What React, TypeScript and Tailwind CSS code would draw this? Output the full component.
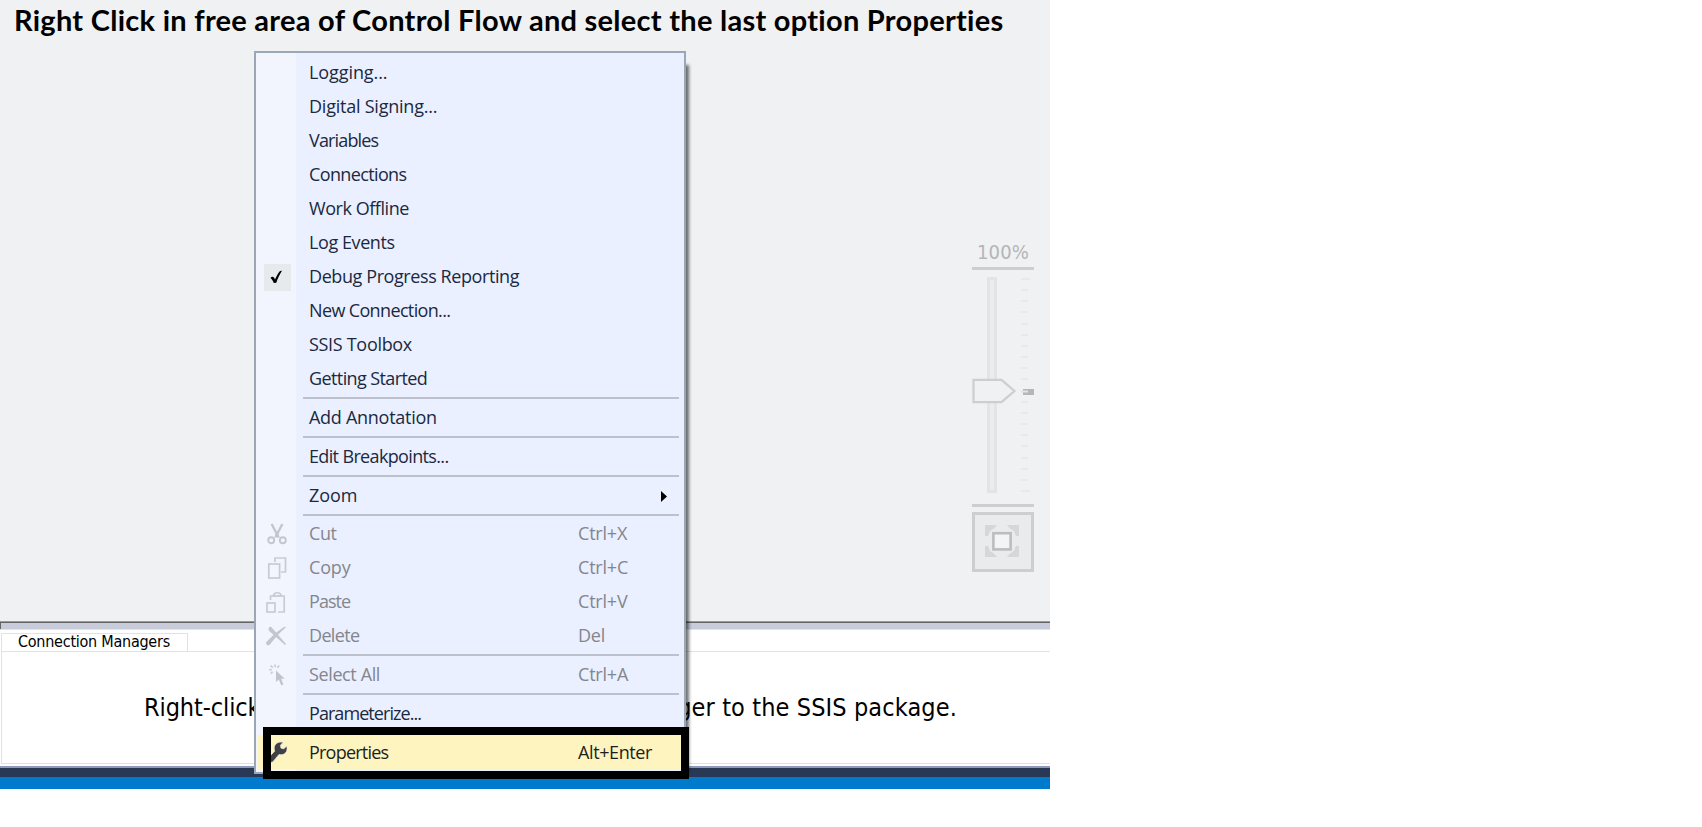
import type { ReactNode } from "react";

const menuFont = "font-['Open_Sans','Noto_Sans',sans-serif]";
const tahoma = "font-['DejaVu_Sans_Condensed','DejaVu_Sans',sans-serif]";

type Item = {
  label: string;
  keys?: string;
  icon?: ReactNode;
  disabled?: boolean;
  active?: boolean;
  arrow?: boolean;
  tracking: string;
};

function CheckIcon() {
  return (
    <span className="flex h-[27px] w-[27px] items-center justify-center bg-[#e6eaed] pr-0.5">
      <svg width="13" height="14" viewBox="0 0 13 14">
        <path d="M0.5 8 C1.5 6.5 3 6.5 4 7.5 L5 9.5 C6.5 6 8.5 2.5 10 1 L12 0.7 C9.5 4.5 7.5 9 6.3 12.7 L3.8 13 C3 11 2 9 0.5 8 Z" fill="#000" />
      </svg>
    </span>
  );
}

function CutIcon() {
  return (
    <svg width="20" height="22" viewBox="0 0 20 22" fill="none" stroke="#c3c6cf">
      <path d="M4.6 1 L11.7 14.5 M15.4 1 L8.3 14.5" strokeWidth="2.4" />
      <circle cx="4.2" cy="17.3" r="3" strokeWidth="1.9" />
      <circle cx="15.8" cy="17.3" r="3" strokeWidth="1.9" />
      <circle cx="10" cy="12" r="2" fill="#c3c6cf" stroke="none" />
    </svg>
  );
}

function CopyIcon() {
  return (
    <svg width="20" height="22" viewBox="0 0 20 22" fill="none" stroke="#c8cbd4" strokeWidth="1.7">
      <path d="M8 5 V1 H18.5 V15 H14" />
      <rect x="1.8" y="7" width="10.8" height="14" />
    </svg>
  );
}

function PasteIcon() {
  return (
    <svg className="mr-0.5" width="20" height="22" viewBox="0 0 20 22" fill="none" stroke="#c8cbd4" strokeWidth="1.7">
      <path d="M4.5 9 V5 H18.2 V21 H12" />
      <path d="M6.5 5 H16 M7.5 5.5 C7.5 0.5 15.3 0.5 15.3 5.5" />
      <rect x="1" y="12" width="8" height="9" />
    </svg>
  );
}

function DeleteIcon() {
  return (
    <svg className="mr-0.5" width="20" height="20" viewBox="0 0 20 20" fill="#c3c6cf">
      <path d="M2.5 3 C2.5 1 4.5 0.2 5.5 1.3 L20 18 L19 19 L3 4.8 Z" />
      <path d="M0 16.5 C5 11 12 4.5 19 0.5 L19.8 1.4 C14 6 9 12 4 18.5 C3 20 -0.5 19 0 16.5 Z" />
    </svg>
  );
}

function SelectIcon() {
  return (
    <svg width="16" height="22" viewBox="0 0 16 22">
      <path d="M7 6.5 V18 L9.8 15.6 L12.2 21.3 L14.4 20.4 L12 14.8 H15.7 Z" fill="#c0c3cd" />
      <path d="M6 0.5 V3.2 M1.8 1.6 L3.6 3.8 M10.2 1.6 L8.4 3.8 M0.2 5.8 H2.8 M1.8 9.6 L3.6 7.8" stroke="#c8cbd4" strokeWidth="1.6" />
    </svg>
  );
}

function WrenchIcon() {
  return (
    <svg width="20" height="22" viewBox="0 0 20 22">
      <path
        d="M1.5 20.5 C0.2 19.2 0.2 17 1.3 15.8 L6.7 10.2 C4.6 4.4 9 0 15.2 1.3 L12.4 4.3 L13 7.2 L15.8 7.8 L18.7 5 C20.4 11.2 16 14.8 11 13.4 L5.6 20 C4.3 21.4 2.7 21.7 1.5 20.5 Z"
        fill="#3f3f44"
        stroke="#efeee6"
        strokeWidth="0.7"
      />
    </svg>
  );
}

const groups: Item[][] = [
  [
    { label: "Logging...", tracking: "tracking-[-0.08px]" },
    { label: "Digital Signing...", tracking: "tracking-[-0.23px]" },
    { label: "Variables", tracking: "tracking-[-0.85px]" },
    { label: "Connections", tracking: "tracking-[-0.63px]" },
    { label: "Work Offline", tracking: "tracking-[-0.45px]" },
    { label: "Log Events", tracking: "tracking-[-0.42px]" },
    { label: "Debug Progress Reporting", icon: <CheckIcon />, tracking: "tracking-[-0.41px]" },
    { label: "New Connection...", tracking: "tracking-[-0.64px]" },
    { label: "SSIS Toolbox", tracking: "tracking-[-0.31px]" },
    { label: "Getting Started", tracking: "tracking-[-0.6px]" },
  ],
  [{ label: "Add Annotation", tracking: "tracking-[-0.28px]" }],
  [{ label: "Edit Breakpoints...", tracking: "tracking-[-0.65px]" }],
  [{ label: "Zoom", arrow: true, tracking: "tracking-[-0.1px]" }],
  [
    { label: "Cut", keys: "Ctrl+X", icon: <CutIcon />, disabled: true, tracking: "tracking-[-0.4px]" },
    { label: "Copy", keys: "Ctrl+C", icon: <CopyIcon />, disabled: true, tracking: "tracking-[-0.15px]" },
    { label: "Paste", keys: "Ctrl+V", icon: <PasteIcon />, disabled: true, tracking: "tracking-[-0.95px]" },
    { label: "Delete", keys: "Del", icon: <DeleteIcon />, disabled: true, tracking: "tracking-[-0.65px]" },
  ],
  [{ label: "Select All", keys: "Ctrl+A", icon: <SelectIcon />, disabled: true, tracking: "tracking-[-0.38px]" }],
  [{ label: "Parameterize...", tracking: "tracking-[-0.94px]" }],
  [{ label: "Properties", keys: "Alt+Enter", icon: <WrenchIcon />, active: true, tracking: "tracking-[-0.78px]" }],
];

function MenuRow({ item }: { item: Item }) {
  const tone = item.disabled ? "text-[#84868c]" : item.active ? "text-[#1e1e1e]" : "text-[#1b293e]";
  const lift = item.active ? "" : "pb-0.5";
  return (
    <div className={`flex h-[34px] items-center ${tone} ${item.active ? "ml-0.5 bg-[#fdf4bf]" : ""}`}>
      <div className={`flex shrink-0 items-center justify-center ${item.active ? "w-10" : "w-[42px]"}`}>{item.icon}</div>
      <span className={`ml-[11px] w-[269px] shrink-0 whitespace-nowrap ${lift} ${item.tracking}`}>{item.label}</span>
      {item.keys && (
        <span className={`whitespace-nowrap ${item.active ? "tracking-[-0.4px]" : "tracking-[-0.2px]"} ${lift}`}>{item.keys}</span>
      )}
      {item.arrow && (
        <svg className="ml-[83px]" width="6" height="11" viewBox="0 0 6 11">
          <path d="M0 0 L6 5.5 L0 11 Z" fill="#000" />
        </svg>
      )}
    </div>
  );
}

function ContextMenu() {
  return (
    <div
      className={`absolute left-[254px] top-[51px] h-[723px] w-[432px] border-2 border-[#9ba7b7] bg-[linear-gradient(to_right,#f2f4fe_40px,#eaf0ff_40px)] pt-[3px] text-[18px] leading-[24px] ${menuFont}`}
    >
      {groups.map((group, i) => (
        <div key={i}>
          {i > 0 && (
            <div className={`ml-[47px] mr-[5px] mt-px h-0.5 ${i === 7 ? "bg-transparent" : "bg-[#bdc1cc]"} ${i === 4 || i === 7 ? "mb-px" : "mb-0.5"}`} />
          )}
          {group.map((item) => (
            <MenuRow key={item.label} item={item} />
          ))}
        </div>
      ))}
    </div>
  );
}

function ZoomControl() {
  return (
    <div className="absolute left-[972px] top-[240px] w-[62px]">
      <div className={`flex h-[27px] items-center justify-center pb-[3px] text-[20px] leading-none tracking-[0.1px] text-[#b4b5b7] ${tahoma}`}>100%</div>
      <div className="h-[3px] bg-[#cdced0]" />
      <div className="mt-[7px] flex h-[216px] justify-between">
        <div className="ml-[15px] w-[10px] border-[3px] border-[#e2e4e6] bg-[#eaecee]" />
        <div className="mr-1 flex w-[9px] flex-col justify-between py-px">
          {Array.from({ length: 20 }, (_, i) => (
            <div key={i} className={`h-0.5 bg-[#e7e9eb] ${i === 0 || i === 19 ? "w-[9px]" : "w-[7px]"}`} />
          ))}
        </div>
      </div>
      <div className="mt-[11px] h-[3px] bg-[#cdced0]" />
      <div className="mt-[5px] flex h-[60px] items-center justify-center border-[3px] border-[#cdced0] bg-[#e9ebec] pb-0.5 pr-0.5">
        <svg width="34" height="32" viewBox="0 0 34 32">
          <path d="M0 0 H12 L9 3.5 L5 6 L3 11 H0 Z M34 0 H22 L25 3.5 L29 6 L31 11 H34 Z M0 32 H12 L9 28.5 L5 26 L3 21 H0 Z M34 32 H22 L25 28.5 L29 26 L31 21 H34 Z" fill="#d5d7d8" />
          <rect x="8.4" y="8.2" width="17.2" height="16.2" fill="#f3f4f5" stroke="#bcbdbf" strokeWidth="2.6" />
        </svg>
      </div>
      <svg className="absolute left-0 top-[138px]" width="62" height="26" viewBox="0 0 62 26">
        <path d="M1.5 1.8 H29.5 L42.5 13 L29.5 24.2 H1.5 Z" fill="#eff1f3" stroke="#cdced0" strokeWidth="2.2" />
        <path d="M51 11 H62 V17 H51 Z" fill="#b5b6b8" />
        <path d="M49 12.5 H56 V14.5 H49 Z" fill="#e3e4e6" />
      </svg>
    </div>
  );
}

export default function App() {
  return (
    <div className="h-[827px] w-full overflow-hidden bg-white">
      <div className="relative flex h-[789px] w-[1050px] flex-col overflow-hidden">
        <div className="h-[621px] bg-[#eff1f3]">
          <h1 className="whitespace-nowrap pl-[14px] pt-[2px] font-['Lato',sans-serif] text-[29px] font-bold leading-[36px] tracking-[0.27px] text-black">
            Right Click in free area of Control Flow and select the last option Properties
          </h1>
        </div>
        <div className="h-[9px] border-b border-t border-b-[#e3e3e8] border-t-[#9a9a9c]">
          <div className="h-full border-l border-t border-[#656565] bg-[#c8cbd9]" />
        </div>
        <div className="flex h-[136px] flex-col pl-px pt-[3px]">
          <div className={`h-[18px] w-[187px] border border-b-0 border-[#e2e2e2] pl-4 text-[16px] leading-[16px] tracking-[-0.25px] text-black ${tahoma}`}>
            Connection Managers
          </div>
          <div className={`flex h-[113px] items-center justify-between whitespace-nowrap border border-r-0 border-[#e2e2e2] pl-[142px] pr-[93px] text-[25px] tracking-[0.12px] text-black ${tahoma}`}>
            <span className="tracking-[-0.1px]">Right-click</span>
            <span>ager to the SSIS package.</span>
          </div>
        </div>
        <div className="h-[11px] border-t-2 border-[#8e9bbc] bg-[#293955]" />
        <div className="h-3 bg-[#007acc]" />

        <ZoomControl />
        <div className="absolute left-[262px] top-[65px] h-[708px] w-[424px] shadow-[3px_0_3px_0_rgba(0,0,0,0.55)]" />
        <ContextMenu />
        <div className="absolute left-[263px] top-[727px] h-[52px] w-[426px] border-8 border-black" />
      </div>
    </div>
  );
}
